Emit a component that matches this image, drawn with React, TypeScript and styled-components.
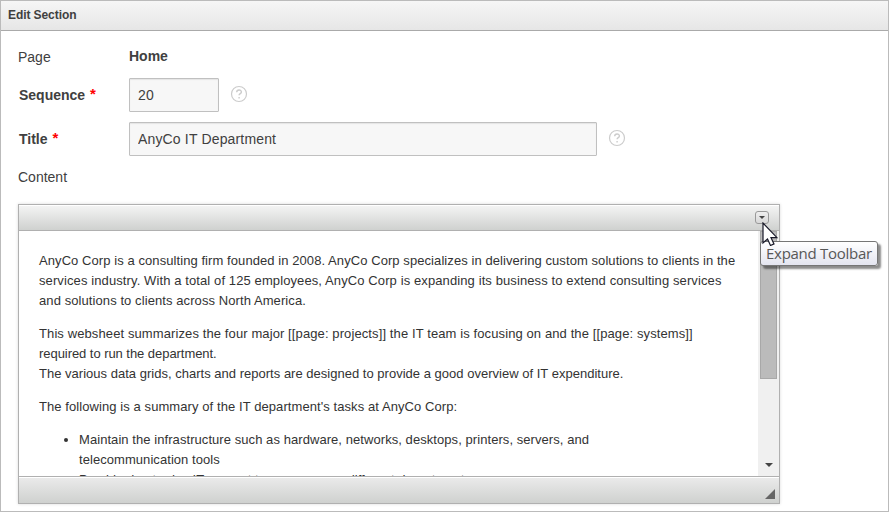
import React from 'react';
import styled, { createGlobalStyle } from 'styled-components';

const GlobalStyle = createGlobalStyle`
  * { box-sizing: border-box; }
  body { margin: 0; background: #fff; font-family: "Liberation Sans", Arial, sans-serif; color: #404040; }
  p, ul { margin: 0; padding: 0; }
`;

const Region = styled.main`
  position: relative;
  width: 889px;
  height: 512px;
  border: 1px solid #bbb;
  overflow: hidden;
`;

const Header = styled.header`
  height: 30px;
  padding-left: 7px;
  border-bottom: 1px solid #aaa;
  background: linear-gradient(#f6f6f6, #e6e6e6);
  font-size: 12px;
  font-weight: bold;
  line-height: 28px;
  letter-spacing: -.08px;
`;

const Form = styled.form`
  display: grid;
  grid-template-columns: 111px 1fr;
  grid-template-rows: 37px 44px 44px 32px;
  padding: 10px 0 0 17px;
  font-size: 14px;
`;

const Label = styled.label<{ $required?: boolean; $raised?: boolean }>`
  padding-top: ${p => (p.$raised ? 3 : p.$required ? 9 : 8)}px;
  padding-left: ${p => (p.$required ? 1 : 0)}px;
  line-height: 16px;
  font-weight: ${p => (p.$required ? 'bold' : 'normal')};
`;

const Star = styled.span`
  margin-left: 1px;
  color: #f00;
  font-weight: bold;
  font-size: 15px;
  line-height: 1px;
  vertical-align: 1px;
`;

const Value = styled.strong`
  padding-top: 7px;
  line-height: 16px;
`;

const Field = styled.div`
  display: flex;
  align-items: flex-start;
  gap: 11px;
`;

const Input = styled.input<{ $width: number }>`
  width: ${p => p.$width}px;
  height: 34px;
  padding: 0 8px;
  border: 1px solid #c0c0c0;
  border-radius: 1px;
  background: #f7f7f7;
  box-shadow: inset 0 1px 1px #e4e4e4;
  color: #404040;
  font: 14px "Liberation Sans", Arial, sans-serif;
  letter-spacing: .16px;
  outline: 0;
`;

const HelpSvg = styled.svg`
  margin-top: 7px;
`;

const Help = () => (
  <HelpSvg width="18" height="18" viewBox="0 0 18 18" fill="none" stroke="#ccc">
    <circle cx="9" cy="9" r="7.5" strokeWidth="1.2" />
    <path d="M6.7 7.2c0-3 4.7-2.9 4.7-.2 0 1.6-2.3 1.7-2.3 3.3M9.1 11.9v1.5" strokeWidth="1.4" />
  </HelpSvg>
);

const Editor = styled.section`
  width: 762px;
  height: 300px;
  margin: 6px 0 0 17px;
  border: 1px solid #b0b0b0;
  box-shadow: 0 0 3px rgba(0, 0, 0, .15);
`;

const Toolbar = styled.div`
  display: flex;
  justify-content: flex-end;
  height: 26px;
  padding: 6px 10px 0 0;
  border-bottom: 1px solid #b0b0b0;
  box-shadow: inset 0 1px #fff;
  background: linear-gradient(#f5f5f5, #cfd1cf);
`;

const ToggleButton = styled.button`
  display: grid;
  place-items: center;
  width: 14px;
  height: 13px;
  padding: 0;
  border: 1px solid #999;
  border-radius: 3px;
  background: linear-gradient(#eee, #d8d8d8);
`;

const Body = styled.div`
  display: flex;
  height: 245px;
`;

const Content = styled.article`
  flex: 1;
  overflow: hidden;
  padding: 20px 0 0 20px;
  color: #333;
  font-size: 13px;
  line-height: 20px;
`;

const Paragraph = styled.p`
  margin-bottom: 13px;
`;

const List = styled.ul`
  padding-left: 40px;
`;

const Line = styled.span<{ $spacing?: number }>`
  display: block;
  white-space: nowrap;
  letter-spacing: ${p => p.$spacing ?? 0}px;
`;

const Scrollbar = styled.div`
  display: flex;
  flex-direction: column;
  align-items: center;
  justify-content: space-between;
  width: 21px;
  padding-bottom: 9px;
  background: #f0f0f0;
`;

const Thumb = styled.div`
  width: 17px;
  height: 148px;
  border: 1px solid #a8a8a8;
  background: #bbb;
`;

const Footer = styled.footer`
  display: flex;
  justify-content: flex-end;
  align-items: flex-end;
  height: 27px;
  padding: 0 4px 4px 0;
  border-top: 1px solid #b0b0b0;
  box-shadow: inset 0 1px #fff;
  background: linear-gradient(#ebebeb, #cfd1cf);
`;

const Tooltip = styled.div`
  position: absolute;
  left: 759px;
  top: 240px;
  width: 118px;
  height: 25px;
  padding-left: 5px;
  border: 1px solid #767676;
  border-radius: 3px;
  background: linear-gradient(#fff, #e4e5f0);
  box-shadow: 3px 3px 2px rgba(0, 0, 0, .45);
  color: #575757;
  font: 15px/23px "Open Sans", "Noto Sans", sans-serif;
  letter-spacing: -.28px;
  white-space: nowrap;
`;

const Cursor = styled.svg`
  position: absolute;
  left: 761px;
  top: 221px;
`;

export default function App() {
  return (
    <>
      <GlobalStyle />
      <Region>
        <Header>Edit Section</Header>
        <Form>
          <Label>Page</Label>
          <Value>Home</Value>
          <Label $required>Sequence <Star>*</Star></Label>
          <Field><Input $width={90} defaultValue="20" /><Help /></Field>
          <Label $required>Title <Star>*</Star></Label>
          <Field><Input $width={468} defaultValue="AnyCo IT Department" /><Help /></Field>
          <Label $raised>Content</Label>
        </Form>
        <Editor>
          <Toolbar>
            <ToggleButton type="button" aria-label="Expand Toolbar">
              <svg width="6" height="3"><path d="M0 0h6L3 3z" fill="#444" /></svg>
            </ToggleButton>
          </Toolbar>
          <Body>
            <Content>
              <Paragraph>
                <Line $spacing={0.075}>AnyCo Corp is a consulting firm founded in 2008. AnyCo Corp specializes in delivering custom solutions to clients in the</Line>
                <Line $spacing={0.105}>services industry. With a total of 125 employees, AnyCo Corp is expanding its business to extend consulting services</Line>
                <Line $spacing={0.085}>and solutions to clients across North America.</Line>
              </Paragraph>
              <Paragraph>
                <Line $spacing={0.105}>This websheet summarizes the four major [[page: projects]] the IT team is focusing on and the [[page: systems]]</Line>
                <Line $spacing={-0.05}>required to run the department.</Line>
                <Line $spacing={0.015}>The various data grids, charts and reports are designed to provide a good overview of IT expenditure.</Line>
              </Paragraph>
              <Paragraph>
                <Line $spacing={0.08}>The following is a summary of the IT department's tasks at AnyCo Corp:</Line>
              </Paragraph>
              <List>
                <li>
                  <Line $spacing={0.065}>Maintain the infrastructure such as hardware, networks, desktops, printers, servers, and</Line>
                  <Line $spacing={0.06}>telecommunication tools</Line>
                </li>
                <li><Line $spacing={0.045}>Provide day-to-day IT support to users across different departments</Line></li>
              </List>
            </Content>
            <Scrollbar>
              <Thumb />
              <svg width="8" height="4"><path d="M0 0h8L4 4z" fill="#444" /></svg>
            </Scrollbar>
          </Body>
          <Footer>
            <svg width="10" height="10"><path d="M10 0v10H0z" fill="#666" /></svg>
          </Footer>
        </Editor>
        <Tooltip>Expand Toolbar</Tooltip>
        <Cursor width="16" height="24" viewBox="0 0 16 24">
          <path d="M1 1v20l4.5-4 3 6.5 3.5-1.6-3-6.2h6z" fill="#fff" stroke="#181828" strokeWidth="1.2" />
        </Cursor>
      </Region>
    </>
  );
}
